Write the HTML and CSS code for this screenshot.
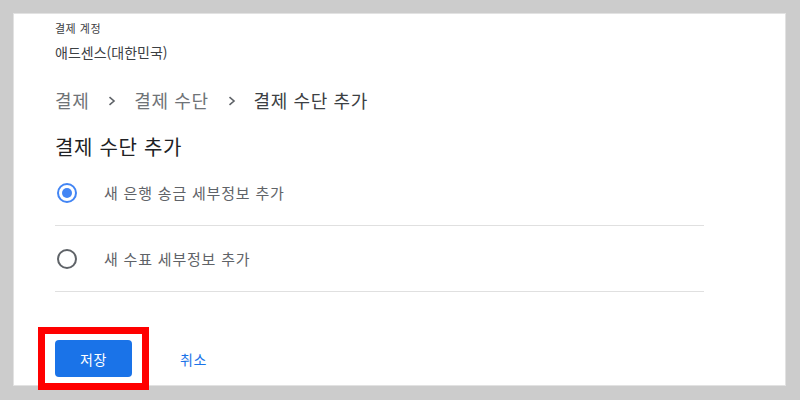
FILE: index.html
```html
<!DOCTYPE html>
<html lang="ko">
<head>
<meta charset="utf-8">
<link rel="stylesheet" href="styles.css">
</head>
<body>
<div class="panel">
  <div class="account-label">결제 계정</div>
  <div class="account-name">애드센스(대한민국)</div>
  <nav class="crumbs">
    <span class="crumb">결제</span>
    <svg class="chev" viewBox="0 0 8 10" width="8" height="10"><path d="M1.5 1.2 L6 5 L1.5 8.8" fill="none" stroke="#5f6368" stroke-width="1.6"/></svg>
    <span class="crumb">결제 수단</span>
    <svg class="chev" viewBox="0 0 8 10" width="8" height="10"><path d="M1.5 1.2 L6 5 L1.5 8.8" fill="none" stroke="#5f6368" stroke-width="1.6"/></svg>
    <span class="crumb current">결제 수단 추가</span>
  </nav>
  <h1 class="title">결제 수단 추가</h1>
  <div class="options">
    <label class="option">
      <span class="radio checked"><span class="dot"></span></span>
      <span class="option-text">새 은행 송금 세부정보 추가</span>
    </label>
    <label class="option">
      <span class="radio"></span>
      <span class="option-text">새 수표 세부정보 추가</span>
    </label>
  </div>
  <div class="actions">
    <div class="save-wrap">
      <button class="btn-save">저장</button>
      <span class="highlight"></span>
    </div>
    <button class="btn-cancel">취소</button>
  </div>
</div>
</body>
</html>
```
FILE: styles.css
```css
html, body {
  margin: 0;
  padding: 0;
}
body {
  background: #cccccc;
  font-family: "Noto Sans CJK KR", "Noto Sans", sans-serif;
  padding: 13px 14px 0 13px;
  height: 400px;
  box-sizing: border-box;
  overflow: hidden;
}
.panel {
  background: #ffffff;
  border: 1px solid #e2e2e2;
  box-sizing: border-box;
  width: 773px;
  height: 373px;
  padding: 6px 0 0 41px;
}
.account-label {
  font-size: 11px;
  line-height: 16px;
  color: #3c4043;
  letter-spacing: 0.5px;
}
.account-name {
  margin-top: 6px;
  font-size: 14px;
  line-height: 20px;
  color: #3c4043;
}
.crumbs {
  margin-top: 26px;
  display: flex;
  align-items: center;
  height: 24px;
  font-size: 18px;
  color: #6f7377;
  letter-spacing: 0.6px;
}
.crumb {
  line-height: 24px;
}
.chev {
  margin: 2px 18px 0 19px;
}
.crumb.current {
  color: #3c4043;
}
.title {
  margin: 22px 0 0;
  font-size: 20px;
  font-weight: 400;
  line-height: 26px;
  color: #202124;
  letter-spacing: 0.7px;
}
.options {
  width: 649px;
}
.option {
  display: flex;
  align-items: center;
  height: 65px;
  border-bottom: 1px solid #e0e0e0;
}
.radio {
  width: 20px;
  height: 20px;
  box-sizing: border-box;
  border: 2px solid #5f6368;
  border-radius: 50%;
  margin-left: 2px;
  display: flex;
  align-items: center;
  justify-content: center;
}
.radio.checked {
  border-color: #4285f4;
}
.dot {
  width: 10px;
  height: 10px;
  border-radius: 50%;
  background: #4285f4;
}
.option-text {
  margin-left: 27px;
  font-size: 15px;
  color: #5f6368;
  letter-spacing: 0.8px;
}
.actions {
  margin-top: 48px;
  display: flex;
  align-items: center;
}
.save-wrap {
  position: relative;
}
.btn-save {
  display: block;
  width: 77px;
  height: 37px;
  border: none;
  border-radius: 4px;
  background: #1a73e8;
  color: #ffffff;
  font-family: inherit;
  font-size: 14px;
  padding: 0;
  letter-spacing: 0.5px;
}
.highlight {
  position: absolute;
  left: -17px;
  top: -13px;
  width: 111px;
  height: 63px;
  box-sizing: border-box;
  border: 7px solid #ff0000;
}
.btn-cancel {
  margin-left: 48px;
  border: none;
  background: none;
  padding: 0;
  font-family: inherit;
  font-size: 14px;
  color: #1a73e8;
  letter-spacing: 0.5px;
}
```
